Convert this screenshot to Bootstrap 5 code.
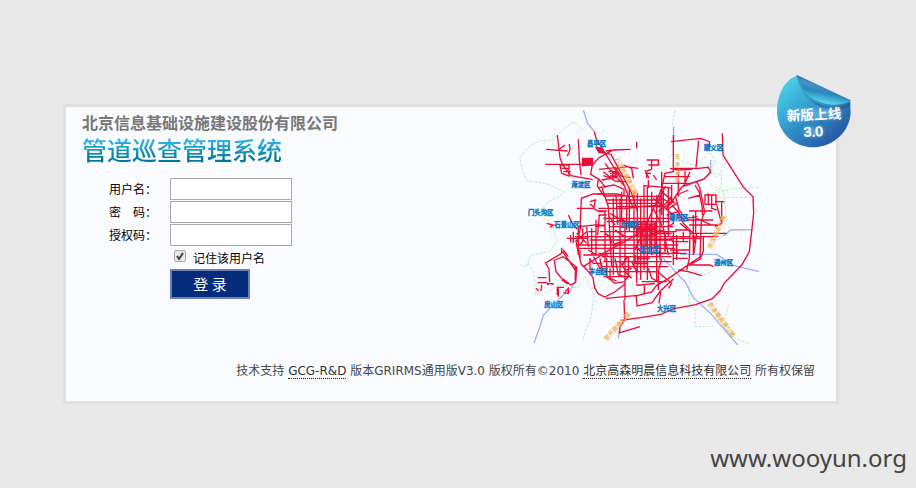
<!DOCTYPE html>
<html lang="zh-CN">
<head>
<meta charset="utf-8">
<meta name="viewport" content="width=device-width, initial-scale=1">
<title>管道巡查管理系统</title>
<link href="https://cdn.jsdelivr.net/npm/bootstrap@5.3.0/dist/css/bootstrap.min.css" rel="stylesheet">
<style>
  body { background: #e8e8e8; color: #000; font: 12px/18px "DejaVu Sans", "Noto Sans CJK SC", sans-serif; }
  .page-area { padding: 104px 14px 0 0; }
  .login-panel { max-width: 776px; background: #fafbff; border: 3px solid #e0e0e0; }
  .login-main { padding: 3px 75px 0 16px; }
  .company { color: #777; font: 700 16px/24px "Noto Sans CJK SC", sans-serif; }
  .system-name { font: 500 25px/30px "Noto Sans CJK SC", sans-serif; background: linear-gradient(#31b5e6 20%, #007a9c 85%); -webkit-background-clip: text; background-clip: text; color: transparent; }
  .login-form { padding: 14px 0 0 27px; font-family: "Noto Sans CJK SC", sans-serif; }
  .field-row { margin-bottom: 1px; }
  .field-row label { width: 61px; white-space: pre; }
  .field-row input { width: 122px; height: 22px; border: 1px solid #a9a9a9; background: #fff; padding: 1px 4px; }
  .remember { padding: 0 0 0 65px; height: 22px; }
  .remember input { appearance: none; width: 12px; height: 12px; border: 1px solid #aaa; border-radius: 2px; margin: 0 7px 4px 0; background: #e8e8e8 url("data:image/svg+xml,%3Csvg xmlns='http://www.w3.org/2000/svg' viewBox='0 0 10 10'%3E%3Cpath d='M2 5l2 3 4-6' fill='none' stroke='%23444' stroke-width='2'/%3E%3C/svg%3E") center / 10px 10px no-repeat; }
  .remember input:not(:checked) { background-image: none; }
  .login-btn { width: 80px; height: 30px; margin-left: 61px; border: 2px solid #6b80b5; background: #052b7b; color: #fff; font-size: 15px; line-height: 18px; }
  .city-map { flex: 0 1 242px; min-width: 0; }
  .city-map svg { width: 100%; display: block; }
  .panel-foot { padding: 17px 21px 21px; color: #444; }
  .panel-foot a { color: #333; text-decoration: none; border-bottom: 1px dotted #222; }
  .release-badge { right: -15px; top: -32px; width: 74px; }
  .site-mark { color: #444; font: 24px/36px "Noto Sans", sans-serif; padding: 36px 9px 0 0; }
</style>
<script src="https://cdn.jsdelivr.net/npm/bootstrap@5.3.0/dist/js/bootstrap.bundle.min.js"></script>
</head>
<body>
<div class="page-area">
  <main class="login-panel position-relative mx-auto">
    <div class="login-main d-flex flex-wrap justify-content-between align-items-start">
      <section>
        <div class="company">北京信息基础设施建设股份有限公司</div>
        <h1 class="system-name m-0">管道巡查管理系统</h1>
        <form class="login-form">
          <div class="field-row d-flex align-items-center"><label for="user">用户名：</label><input id="user" type="text"></div>
          <div class="field-row d-flex align-items-center"><label for="pass">密　码：</label><input id="pass" type="password"></div>
          <div class="field-row d-flex align-items-center"><label for="code">授权码：</label><input id="code" type="text"></div>
          <div class="remember d-flex align-items-center"><input id="keep" type="checkbox" checked><label for="keep">记住该用户名</label></div>
          <button class="login-btn p-0 d-block" type="submit">登 录</button>
        </form>
      </section>
      <div class="city-map">
        <svg viewBox="27 15 726 705" role="img" aria-label="北京市管道分布图">
          <g fill="none" stroke="#b9f3bd" stroke-width="3" stroke-dasharray="9 4">
            <path d="M221 75l-30-25-40 30-20 25-40 2-30 15-32 35 10 45 12 25 60 9 52 25-15 14-34 15-15 20 2 28 25 20 15 50-20 30-60 13-12 35-28-12M55 475l17 30 5 65 25-3 45-28 55 10 25-35 25 55-10 75-15 30-10 35"/>
            <path d="M496 15l-8 38 2 35M475 160l15-20 10 22 55 20 45-40 15 20-8 35 12 20 15-20v48l-25 20 15 12h115M600 240l40 15 10 90-15 55-25 10M610 265l60-15 80-2M540 500l-5 90 20 25v50h55M655 600l-10 45 30 55 40 15M425 465l-20 30 30 30-60 60-8-55M300 490l70 25 35-20M545 495l40 15 22-12"/>
          </g>
          <g fill="none" stroke="#9bb2f7" stroke-width="4">
            <path d="M220 15l13 40 20 25M491 65v50M602 165v35l-20 23-60 22M200 485l-5 45-15 28-20 12-60 60-10 35-18 50"/>
            <path d="M460 460l45 50 20 20 25 48 27 25 23 20 60 70 23 27M510 448h110l50 33 77 19M640 393l22-18 68-1M325 700l3-20"/>
          </g>
          <!-- trunk roads -->
          <g fill="none" stroke="#e80e35" stroke-width="4">
            <path d="M253 80l5 20 80 130 30 75M287 138l25-3 50-2M106 178h110M142 90l8 68 8 22 25 32 65 12M108 133l65 5M205 103l3 60 5 47M225 160l22 20 20-22 40-22M247 178l-5 30 25 15 20 25"/>
            <path d="M637 85l2 65 60 95 30 30 2 50-10 90-3 25-23 40-53 55-10 20-25 26-50 18-65 12-40 17-60 10-60 8M490 90v110l-25 5-10 45-20 50-60 135M483 110l90-10 25 10 2 15M566 107l-8 80M490 190h75l30-3 7 15-20 20-65 22-35 50-15 20"/>
            <path d="M210 375l4-95 35-13h24M214 360l-15 58 15 60 20 20 15 20 5 30 10 18 20 10 30-15 30-23M220 485l70-45 70-40 75-45M345 360v225M342 585l2 60-14 20-2 20M288 580l95-9 42-10 15-20 35-20 65-45 30-20 4-110 10-25-15-75-10-15M372 570l7 4 2 29 45-10 25-35 40-37M330 683l60-18"/>
          </g>
          <!-- city streets -->
          <g fill="none" stroke="#e80e35" stroke-width="4">
            <path fill="#e80e35" d="M218 160h29v20l-29 2zM258 128l15 2 6 14-12-2z"/>
            <path d="M258 128l15 2 8 14 22 4 60 112 20 60M145 135l20-15M178 117l2 17-8 20M150 180l5 25 22 8v-33h-20zM156 190h22M160 200h22M110 355l20 5-10 7M175 330l12 25 15 18M240 290l16-5-4 22-12-10M200 310h50l15 8h25M205 365l60-6 20 5"/>
            <path d="M267 193l50-5 15 25 30 5M275 225l45-8 22 25M285 175l15 20 22 10-15 15-27-8M265 223l-3 20 20 30h60v-20l-30-13-45 8M320 190l30-5 35 5M340 180l25 10 5 30M280 200l35 28 30 2M295 200h25M300 206h25M300 213h25M308 198v28M380 110v20M410 165h35v15h-30M425 165v28l-15 5M405 195l12 25M405 205h18M410 200v20M430 210l10 15M415 225v25"/>
            <path d="M275 245l20 60 5 90 5 90M262 267h60l30 7h100M265 310h90l35-5 70-5M285 320v150M310 280v230M318 270l5 90M330 280v230M335 260v90M350 270v105M358 250v130M372 260v230M382 265v240M392 280v245M402 240v255M412 245v280M425 260v190M440 270v260M450 265v200M290 285h165M290 295h165M320 305h150M280 340h200M290 350h190M300 365h190M270 380h230M260 395h280M240 405h250M200 420h305M205 430h290M265 445h265M275 455h210M280 470h205M275 485h200M285 500h155M280 515h80M395 530h75"/>
            <path d="M455 200v130M465 215h75M455 235h90M480 190l25 5 42-2M505 200v75M525 198v38M540 200l-20 45M440 300l25-55 20 5M400 242l75 6M430 280l60 50M450 255l45 40M460 250v110M475 245v150M485 300l20 20 15 35 30 30 5 30M497 275l10 40 20 25 35-5M455 305l30-25M445 320l45-35M430 310l30 60 15 80M470 330l35-10M470 315l30-20M455 280l30 15M480 275l10 15-12 10M485 240v50M490 325v30l-15 10M505 325l20 25M500 270l35-15"/>
            <path d="M537 318h70M530 345h80M537 360h85M510 355l30 25-2 80-8 35M550 330v120M557 318v70M570 270l-35 10M583 270h35v28h-33v-30M595 265v35M605 270v40l15 5M615 290h28M635 290v65M620 300l15 55-20 10M560 340l45 20M540 385h110M545 395h80M560 385l-8 60M580 393v45l-10 25-20 10-12 10M545 480h55l10 5M505 495l30 5 40 12M490 380v100M500 390v75M505 440l-20 5M520 410v-30M480 400h90M485 410h50M480 435h60M488 460h45M495 375h40M555 240l12 20 10 50v20"/>
            <path d="M205 370v80M218 370v40l-10 10M230 365l5 60M245 370v80M258 345v105M268 330l-5 60M235 380h25M195 395h80M170 400h65M182 390v22M190 380v35M200 385l30 30M195 410l35-30M220 450h75M235 435l25 15M210 435v25M240 460v35M250 455l20 35 15 10M270 460l5 35M255 365l30-5M265 320h20M265 330h25M295 330l20 30M300 325l25 15"/>
            <path d="M275 475h-25l-12-15M275 475v35M290 460v55l25 20 30-5M315 460l10 50 20 5M330 470l15 25 20-5M355 455v60l-10 10M365 470l15 30v35M385 455l-5 50M405 500h40v55M415 490l10 30 20 10M395 540l40-5M378 540h25v28M455 460l-10 40 15 15M455 510l30 25-10 15M452 560l-5 35M345 500l20 20M300 490v30l20 8"/>
            <path d="M155 428v17l-50 30M135 465l25-10 40 32-3 45-15 8-22-18M158 440l40 58M133 465l5 35 30 35M160 435l15 20M105 472l12 20 2 40M83 518h27M83 533h27l5 8M78 550l8 7M95 540l-2 18M142 570v-23h20M145 550v25M165 560l10-10v15l-15-2M112 535l20 2M196 485v40M155 525l20 12"/>
          </g>
          <g fill="none" stroke="#e80e35" stroke-width="5">
            <path d="M373 350h65v20h-65zM378 358h55M380 375h60v15h-60zM395 348v80M408 350v75M420 355v70M435 355v75M400 403h85M420 385h65M445 375l20 5v50M375 425l25 20h70M360 360l-20-15-20 5M315 375l30 20M285 385l15 10 5 20M305 420l30-10M352 455l-15 25M375 450v25h40M385 460h35M450 425v30M465 405v35"/>
          </g>
          <g fill="#f0b24f" font-family="Noto Sans CJK SC, sans-serif" font-size="18" font-weight="700">
            <text transform="translate(314 161) rotate(62)">八达岭高速公路</text>
            <g font-size="15">
              <text x="495" y="160">京</text><text x="495" y="183">承</text><text x="495" y="206">高</text><text x="495" y="229">速</text>
            </g>
            <text transform="translate(290 709) rotate(-48)">京开高速公路</text>
            <text transform="translate(592 597) rotate(54)">京津塘高速公路</text>
            <text transform="translate(604 433) rotate(-66)">京沈高速公路</text>
          </g>
          <g fill="#0875c3" stroke="#0875c3" stroke-width="1" font-family="Noto Sans CJK SC, sans-serif" font-weight="700" font-size="19">
            <text x="231" y="122">昌平区</text><text x="184" y="245">海淀区</text><text x="54" y="330">门头沟区</text>
            <text x="133" y="366">石景山区</text><text x="332" y="366">西城区</text><text x="582" y="136">顺义区</text>
            <text x="478" y="345">朝阳区</text><text x="390" y="440">崇文区</text><text x="236" y="507">丰台区</text>
            <text x="103" y="607">房山区</text><text x="612" y="480">通州区</text><text x="441" y="618">大兴区</text>
          </g>
        </svg>
      </div>
    </div>
    <footer class="panel-foot text-end">技术支持 <a href="#">GCG-R&amp;D</a> 版本GRIRMS通用版V3.0 版权所有©2010 <a href="#">北京高森明晨信息科技有限公司</a> 所有权保留</footer>
    <svg class="release-badge position-absolute" viewBox="36 29 222 219" role="img" aria-label="新版上线 3.0">
      <defs>
        <linearGradient id="disc" x1=".1" y1=".1" x2=".8" y2=".9"><stop stop-color="#49d0e8"/><stop offset=".5" stop-color="#3194c8"/><stop offset="1" stop-color="#2858a5"/></linearGradient>
        <linearGradient id="fold" x1=".65" y1=".1" x2=".35" y2=".9"><stop stop-color="#2868a9"/><stop offset=".35" stop-color="#4a91ca"/><stop offset=".6" stop-color="#2787bd"/><stop offset="1" stop-color="#5bdbed"/></linearGradient>
        <filter id="glow" x="-20%" y="-50%" width="140%" height="200%"><feGaussianBlur stdDeviation="6"/></filter>
      </defs>
      <path d="M95 31C58 44 36 89 36 137c0 62 48 109 108 109s113-48 113-109l-2-31z" fill="url(#disc)"/>
      <path d="M96 33c12 52 50 90 104 91 24 0 44-5 57-14l-2 16c-25 10-74 14-110-15C113 88 101 60 96 33" fill="#1d5689" opacity=".55"/>
      <path d="M95 30l162 76c-14 9-37 13-58 12C153 115 107 82 95 30" fill="url(#fold)"/>
      <path d="M95 30l162 76" stroke="#2464a0" stroke-width="2"/>
      <g font-family="Noto Sans CJK SC, sans-serif" font-weight="500" text-anchor="middle" fill="#fff">
        <path d="M68 135l158-7v30l-158 7zM118 187h56v24h-56z" fill="#7cc8f0" filter="url(#glow)" opacity=".55"/>
        <text transform="rotate(-3 147 148)" x="147" y="163" font-size="41" font-weight="700">新版上线</text>
        <text transform="rotate(-3 145 198)" x="145" y="213" font-size="41" font-family="Liberation Sans, sans-serif" stroke="#fff" stroke-width="2">3.0</text>
      </g>
    </svg>
  </main>
</div>
<div class="site-mark text-end">www.wooyun.org</div>
</body>
</html>
